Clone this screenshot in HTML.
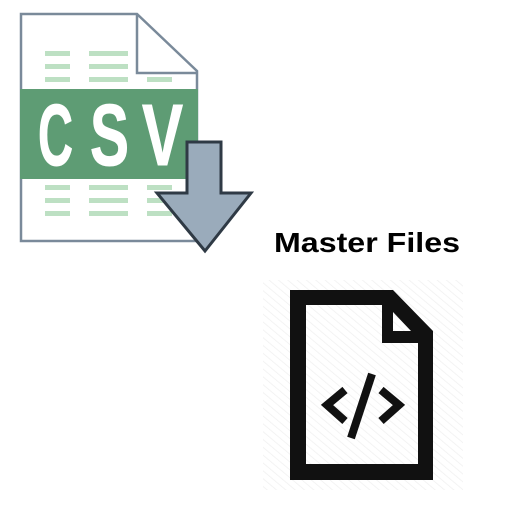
<!DOCTYPE html>
<html><head><meta charset="utf-8"><style>
html,body{margin:0;padding:0;background:#fff;width:512px;height:512px;overflow:hidden}
</style></head><body>
<svg width="512" height="512" viewBox="0 0 512 512" xmlns="http://www.w3.org/2000/svg">
<defs>
<pattern id="hatch" width="6" height="6" patternUnits="userSpaceOnUse" patternTransform="rotate(-50)">
<line x1="0" y1="0" x2="0" y2="6" stroke="#f0f0f0" stroke-width="1.5"/>
</pattern>
</defs>
<path d="M21 14 H137 L197 71 V241 H21 Z" fill="#fff" stroke="#7a8a9a" stroke-width="2.5"/>
<path d="M137 14 V73 H197" fill="none" stroke="#7a8a9a" stroke-width="2.5"/>
<g fill="#bde0c3">
<rect x="45" y="51" width="25" height="5"/><rect x="89" y="51" width="39" height="5"/>
<rect x="45" y="64" width="25" height="5"/><rect x="89" y="64" width="39" height="5"/>
<rect x="45" y="77" width="25" height="5"/><rect x="89" y="77" width="39" height="5"/><rect x="147" y="77" width="25" height="5"/>
<rect x="45" y="185" width="25" height="5"/><rect x="89" y="185" width="39" height="5"/><rect x="147" y="185" width="25" height="5"/>
<rect x="45" y="198" width="25" height="5"/><rect x="89" y="198" width="39" height="5"/><rect x="147" y="198" width="25" height="5"/>
<rect x="45" y="211" width="25" height="5"/><rect x="89" y="211" width="39" height="5"/><rect x="147" y="211" width="25" height="5"/>
</g>
<rect x="20" y="89" width="178" height="90" fill="#5e9c74"/>
<g font-family="Liberation Sans, sans-serif" font-weight="bold" font-size="87" fill="#fff" stroke="#fff" stroke-width="1">
<text x="38" y="165" textLength="35" lengthAdjust="spacingAndGlyphs">C</text>
<text x="90" y="165" textLength="39" lengthAdjust="spacingAndGlyphs">S</text>
<text x="142" y="165" textLength="41" lengthAdjust="spacingAndGlyphs">V</text>
</g>
<path d="M187 142 H221 V193 H251 L205 251 L157 193 H187 Z" fill="#9aabbb" stroke="#2f3a45" stroke-width="3"/>
<text x="274" y="252" font-family="Liberation Sans, sans-serif" font-weight="bold" font-size="28" fill="#000" textLength="186" lengthAdjust="spacingAndGlyphs">Master Files</text>
<rect x="263" y="280" width="200" height="210" fill="url(#hatch)"/>
<path fill="#111" fill-rule="evenodd" d="M290 290 H393 L433 331 V480 H290 Z M306 305 V464 H418 V343 H382 V305 Z M393 312 V331 H411 Z"/>
<g stroke="#111" stroke-width="8" fill="none">
<path d="M345 390 L327 405 L345 421"/>
<path d="M381 390 L399 405 L381 421"/>
<path d="M372 374 L351 438"/>
</g>
</svg>
</body></html>
